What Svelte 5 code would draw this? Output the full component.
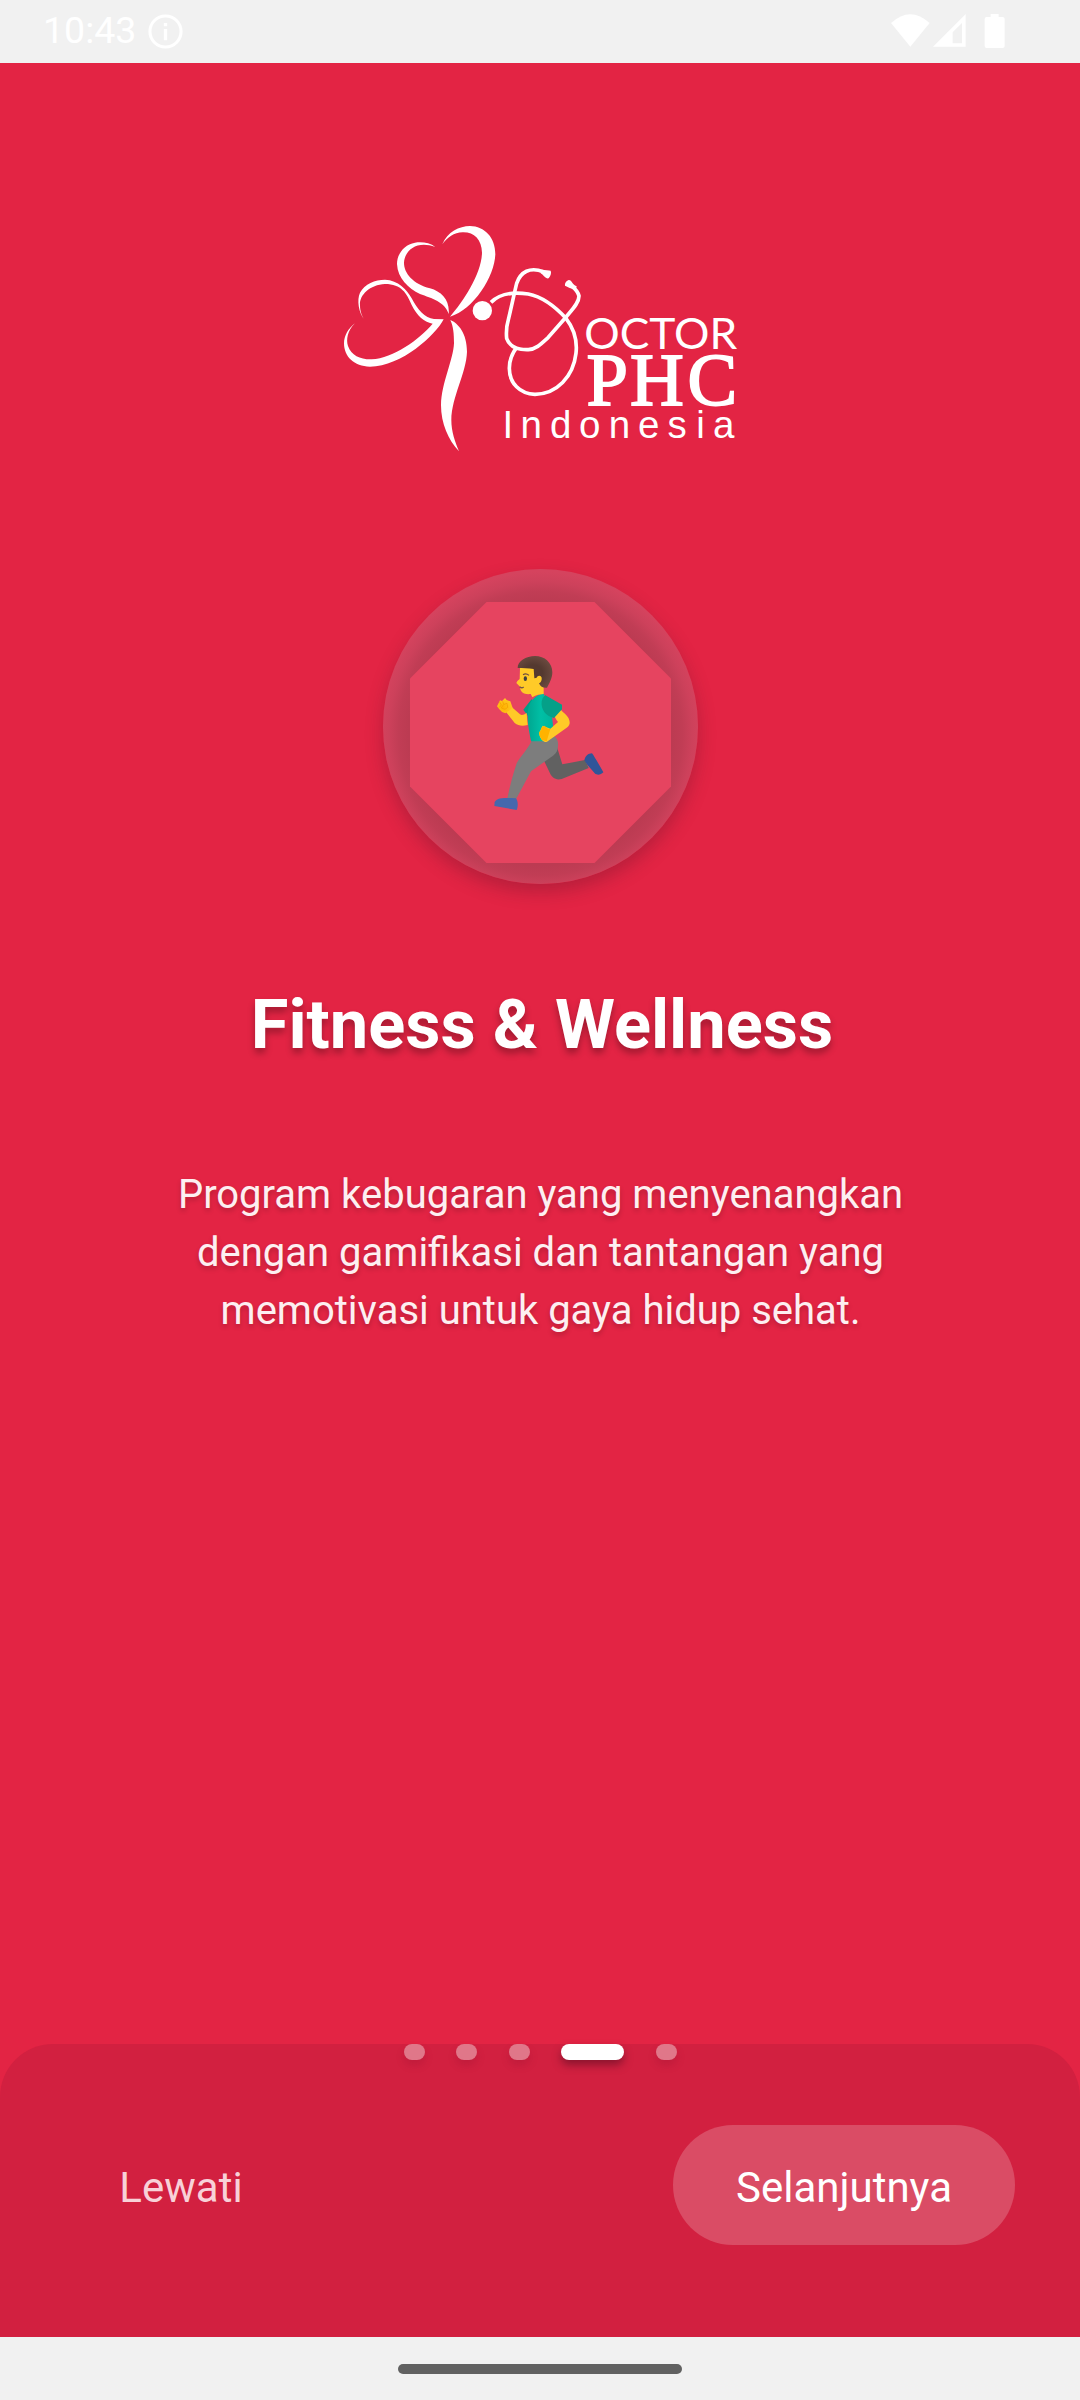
<script>
  const title = 'Fitness & Wellness';
  const lines = [
    'Program kebugaran yang menyenangkan',
    'dengan gamifikasi dan tantangan yang',
    'memotivasi untuk gaya hidup sehat.'
  ];
  const slides = 5;
  const current = 3;
</script>

<div class="screen">
  <header class="status">
    <span class="time">10:43</span>
    <svg class="info" viewBox="0 0 36 36" width="35" height="35">
      <circle cx="18" cy="18" r="16" fill="none" stroke="#fff" stroke-width="3.2" />
      <path d="M16.3 9.3h3.4v3.4h-3.4zM16.3 15.5h3.4V27h-3.4z" fill="#fff" />
    </svg>
    <svg class="signals" viewBox="0 0 348 105" width="116" height="35" fill="#fff">
      <path d="M0 27Q58-26 116 27L58 98Z" />
      <path fill-rule="evenodd" d="M126 98L224 0V98ZM185 55V88H213V27Z" />
      <path d="M299 0h24v9h12q6 0 6 6v81q0 6-6 6h-48q-6 0-6-6V15q0-6 6-6h12z" />
    </svg>
  </header>

  <main>
    <svg class="logo" viewBox="340 220 400 235" width="400" height="235" fill="#fff">
      <g transform="translate(330 210) scale(.33333)">
        <path d="M337 103C352 66 388 48 420 48C464 49 496 82 496 133C494 200 430 300 360 320C400 275 455 190 456 128C455 88 432 66 398 67C372 68 352 82 337 103Z" />
        <path d="M316 111C300 98 275 95 255 98C222 104 201 132 201 162C203 205 235 235 270 252C305 265 345 275 356 312C360 270 335 245 300 235C250 222 222 190 222 158C224 120 262 90 316 111Z" />
        <path d="M104 330C86 308 80 270 90 248C104 222 135 209 165 209C205 211 230 238 245 265C262 298 285 325 312 327L341 328C318 374 215 470 120 470C72 469 42 440 42 400C42 378 55 355 75 340C52 362 48 390 54 408C64 437 92 449 125 448C190 445 268 388 308 341C280 335 262 318 245 285C230 250 215 222 165 222C120 224 88 255 90 285C90 305 96 318 104 330Z" />
        <path d="M361 330C385 340 411 370 411 425C409 490 365 560 364 630C364 665 375 695 387 724C355 690 333 640 333 585C334 520 370 450 372 400C372 370 370 350 361 330Z" />
        <circle cx="457" cy="302" r="29" />
      </g>
      <g transform="translate(480 210) scale(.33333)">
        <g fill="none" stroke="#fff" stroke-width="11">
          <path d="M33 277C60 250 100 245 145 252C195 262 235 300 258 325C285 360 292 395 288 430C280 500 230 553 165 553C120 552 88 520 88 475C88 450 98 428 110 412" />
          <path d="M190 185C150 170 122 185 110 220C105 240 92 300 86 325C80 345 78 365 80 385C88 408 112 420 145 419C170 417 185 400 205 382L255 325C275 300 297 280 297 258C294 245 285 236 275 228" />
        </g>
        <path d="M184 179C196 181 207 180 212 182Q216 192 206 205C196 207 192 196 182 190Z" />
        <path d="M288 237C276 238 263 231 255 227Q253 216 266 210C276 209 275 223 290 229Z" />
      </g>
      <text class="octor" x="584.3" y="348.5" textLength="153" lengthAdjust="spacingAndGlyphs">OCTOR</text>
      <text class="phc" x="586.5 630 687.5" y="404.5">PHC</text>
      <text class="indo" x="502.5 520.5 550 579 608.7 638 667.5 696.3 713" y="437.6">Indonesia</text>
    </svg>

    <div class="badge">
      <div class="octagon"></div>
      <svg class="runner" viewBox="70 45 332 468" width="110.7" height="156">
        <defs>
          <radialGradient id="hair" cx=".45" cy=".55" r=".6">
            <stop offset=".45" stop-color="#543930" /><stop offset="1" stop-color="#6d4c41" />
          </radialGradient>
          <linearGradient id="shirt" x1="0" x2="1"><stop offset=".1" stop-color="#00ab94" /><stop offset=".5" stop-color="#00bfa5" /><stop offset="1" stop-color="#00b49b" /></linearGradient>
          <radialGradient id="fist" cx=".4" cy=".6" r=".7"><stop offset="0" stop-color="#ffb300" /><stop offset="1" stop-color="#ffca28" /></radialGradient>
        </defs>
        <path fill="#616161" d="M258 318L275 373L343 360L354 384L273 417C255 422 243 412 238 400L218 358Z" />
        <path fill="#305599" d="M341 360C345 347 352 341 364 340C370 347 391 384 398 397C390 405 380 407 372 400C362 386 348 376 341 360Z" />
        <path fill="#7d7d7d" d="M183 302L250 288Q264 298 262 318C261 332 257 340 247 347L181 394L136 478L110 474C119 435 126 405 138 370C149 348 168 333 183 302Z" />
        <path fill="#4568ad" d="M72 487C76 475 92 472 136 475C143 485 142 501 138 510L71 498Z" />
        <path fill="#009e86" d="M183 177L158 209L172 228L190 205Z" />
        <path fill="#ffca28" d="M123 201L148 223Q155 228 168 219L171 255C154 260 143 257 132 249L106 216Z" />
        <path fill="url(#fist)" d="M79 199L88 181L94 183L103 174L108 180L119 184L126 204L104 220Q94 219 86 208Z" />
        <path fill="none" stroke="#f29b00" stroke-width="2" d="M86 185L92 195L86 202M96 184L99 193L92 204L103 208L111 202L109 190L100 193" />
        <path fill="url(#shirt)" d="M219 161C195 164 178 181 173 205C167 238 175 271 181 304H222L250 285L244 228Z" />
        <path fill="#ffca28" d="M148 84H202L219 134V162C209 162 196 164 185 172L180 162C162 164 149 159 148 140L137 129Q137 124 147 117Z" />
        <path fill="#ffca28" d="M269 208C281 222 296 229 297 247Q298 257 287 264L229 305C216 309 207 294 205 279L216 257L239 266L262 246Q257 240 252 230Z" />
        <path fill="#ffb300" d="M205 277L212 271L211 264L221 257L232 266L239 267L228 304L214 300L207 287Z" />
        <path fill="#05a088" d="M219 163L274 194V208L250 234C225 229 210 208 213 184Q214 173 224 165Z" />
        <path fill="url(#hair)" d="M141 84C140 64 166 48 193 48C222 48 245 68 245 97C245 115 236 130 229 143C218 144 209 141 205 130L209 112L191 115L189 87C173 84 157 85 141 84Z" />
        <path fill="#ffca28" d="M197 117C198 105 211 104 213 113C214 125 208 130 199 131L192 120Z" />
        <ellipse cx="164" cy="116" rx="5" ry="7" fill="#404040" />
        <path fill="none" stroke="#6d4c41" stroke-width="3.5" d="M157 104Q166 98 175 106" />
        <path fill="none" stroke="#795548" stroke-width="4" d="M147 140Q153 146 159 141" />
      </svg>
    </div>

    <h1>{title}</h1>
    <p>
      {#each lines as line}<span>{line}</span>{/each}
    </p>
  </main>

  <footer>
    <div class="dots">
      {#each Array(slides) as _, i}<i class:active={i === current}></i>{/each}
    </div>
    <div class="actions">
      <button class="skip">Lewati</button>
      <button class="next">Selanjutnya</button>
    </div>
  </footer>
  <div class="nav"><i></i></div>
</div>

<style>
  :global(body) { background: #e32444; }
  .screen {
    width: 1080px;
    height: 2400px;
    display: flex;
    flex-direction: column;
    background: #e32444;
    color: #fff;
    font-family: Roboto, sans-serif;
    overflow: hidden;
  }
  .status {
    height: 63px;
    flex: none;
    box-sizing: border-box;
    padding: 0 73px 0 43px;
    display: flex;
    align-items: center;
    background: #f1f1f1;
  }
  .time { font-size: 37.5px; line-height: 60px; height: 63px; width: 105px; }
  .signals { margin-left: auto; }
  main {
    flex: 1;
    display: flex;
    flex-direction: column;
    align-items: center;
    padding-top: 157px;
  }
  .logo { flex: none; overflow: visible; }
  .octor { font: 400 42.5px Lato, sans-serif; }
  .phc { font: 400 74.5px 'Liberation Serif', serif; stroke: #fff; stroke-width: 1.8px; }
  .indo { font: 400 38.5px 'Liberation Sans', sans-serif; }
  .badge {
    flex: none;
    width: 315px;
    height: 315px;
    margin: 114px 0 0 1px;
    border-radius: 50%;
    display: grid;
    place-items: center;
    background: radial-gradient(circle 165px at 50% 52.2%, #bc3b52 80%, #c13d55 86%, #cd415b 92%, #d5435e 98%);
    box-shadow: 0 8px 18px rgba(80, 20, 40, .3);
  }
  .badge > * { grid-area: 1 / 1; }
  .octagon {
    width: 261px;
    height: 261px;
    margin-top: 12px;
    background: #e64460;
    clip-path: polygon(29.3% 0, 70.7% 0, 100% 29.3%, 100% 70.7%, 70.7% 100%, 29.3% 100%, 0 70.7%, 0 29.3%);
  }
  .runner { z-index: 1; margin: 12px 0 0 17px; }
  h1 {
    margin: 101px 0 0 4px;
    font-size: 68.6px;
    line-height: 80px;
    font-weight: 700;
    white-space: nowrap;
    text-shadow: 0 5px 7px rgba(0, 0, 0, .3);
  }
  p {
    margin: 101px 0 0 1px;
    display: flex;
    flex-direction: column;
    align-items: center;
    font-size: 40px;
    line-height: 58px;
    color: #fdeff1;
    white-space: nowrap;
    text-shadow: 0 3px 5px rgba(0, 0, 0, .2);
  }
  footer {
    flex: none;
    height: 293px;
    background: #d22040;
    border-radius: 53px 53px 0 0;
  }
  .dots { display: flex; justify-content: center; gap: 31.5px; height: 16px; }
  .dots i {
    width: 21px;
    border-radius: 8px;
    background: #e07789;
    box-shadow: 0 5px 8px rgba(120, 10, 40, .2);
  }
  .dots .active { width: 63px; background: #fff; box-shadow: 0 5px 8px rgba(70, 10, 30, .5); }
  .actions { display: flex; justify-content: space-between; padding: 65px 65px 0; }
  button {
    height: 120px;
    padding: 0;
    border: 0;
    background: none;
    font: 400 42px/126px Roboto, sans-serif;
    color: #fff;
  }
  .skip { width: 232px; color: #f8d1d8; }
  .next { width: 342px; border-radius: 60px; background: #da4c65; }
  .nav { height: 63px; flex: none; background: #f1f1f1; display: grid; place-items: center; }
  .nav i { width: 284px; height: 10px; border-radius: 5px; background: #616161; }
</style>
